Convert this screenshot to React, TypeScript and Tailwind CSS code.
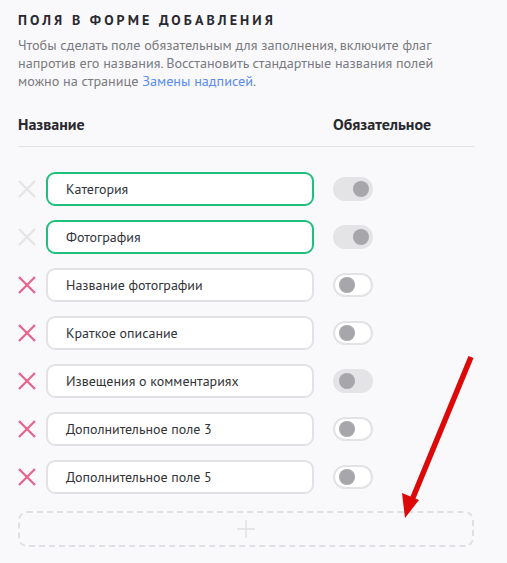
type Field = {
  name: string;
  locked: boolean;
  toggle: "lockedOn" | "lockedOff" | "off";
};

const FIELDS: Field[] = [
  { name: "Категория", locked: true, toggle: "lockedOn" },
  { name: "Фотография", locked: true, toggle: "lockedOn" },
  { name: "Название фотографии", locked: false, toggle: "off" },
  { name: "Краткое описание", locked: false, toggle: "off" },
  { name: "Извещения о комментариях", locked: false, toggle: "lockedOff" },
  { name: "Дополнительное поле 3", locked: false, toggle: "off" },
  { name: "Дополнительное поле 5", locked: false, toggle: "off" },
];

function RemoveIcon({ muted }: { muted: boolean }) {
  return (
    <svg width="18" height="18" viewBox="0 0 18 18" aria-hidden="true">
      <path
        d="M1 1 L17 17 M17 1 L1 17"
        stroke={muted ? "#e4e4e6" : "#e8628d"}
        strokeWidth="2.2"
        fill="none"
      />
    </svg>
  );
}

function Toggle({ state }: { state: Field["toggle"] }) {
  if (state === "off") {
    return (
      <span className="flex h-[24px] w-[40px] items-center rounded-full border-2 border-[#e3e3e6] bg-white pl-[4px]">
        <span className="h-[16px] w-[16px] rounded-full bg-[#a7a7ab]" />
      </span>
    );
  }

  return (
    <span
      className={`flex h-[24px] w-[40px] items-center rounded-full bg-[#e4e4e7] ${
        state === "lockedOn" ? "justify-end pr-[4px]" : "justify-start pl-[6px]"
      }`}
    >
      <span className="h-[16px] w-[16px] rounded-full bg-[#a7a7ab]" />
    </span>
  );
}

function FieldRow({ field }: { field: Field }) {
  return (
    <div className="flex items-center">
      <div className="flex w-[28px] items-center">
        <RemoveIcon muted={field.locked} />
      </div>
      <div
        className={`flex h-[34px] w-[268px] items-center rounded-[9px] border-2 bg-white pl-[18px] text-[14px] text-[#333338] ${
          field.locked ? "border-[#1fc07e]" : "border-[#e2e2e6]"
        }`}
      >
        {field.name}
      </div>
      <div className="ml-[19px]">
        <Toggle state={field.toggle} />
      </div>
    </div>
  );
}

export default function App() {
  return (
    <div
      className="relative h-[563px] w-[507px] overflow-hidden bg-[#f9f9fb] pl-[18px] pr-[33px] pt-[10px]"
      style={{ fontFamily: '"PT Sans", "Liberation Sans", "Noto Sans", sans-serif' }}
    >
      <h2 className="text-[14px] font-bold uppercase leading-[20px] tracking-[3.1px] text-[#2a2930]">
        Поля в форме добавления
      </h2>
      <p className="mt-[6px] pr-[20px] text-[14.2px] leading-[18px] text-[#7a7a80]">
        Чтобы сделать поле обязательным для заполнения, включите флаг напротив его названия.
        Восстановить стандартные названия полей можно на странице{" "}
        <a className="text-[#5a8cf0]">Замены надписей</a>.
      </p>

      <div className="mt-[24px] flex border-b border-[#e3e3e6] pb-[12px] text-[16px] font-bold leading-[20px] text-[#2a2930]">
        <span className="w-[315px]">Название</span>
        <span>Обязательное</span>
      </div>

      <div className="mt-[25px] flex flex-col gap-[14px]">
        {FIELDS.map((field) => (
          <FieldRow key={field.name} field={field} />
        ))}
      </div>

      <div className="mt-[17px] flex h-[36px] items-center justify-center rounded-[9px] border-2 border-dashed border-[#e0e0e4]">
        <svg width="20" height="20" viewBox="0 0 20 20" aria-hidden="true">
          <path d="M10 1 V19 M1 10 H19" stroke="#e0e0e3" strokeWidth="1.5" />
        </svg>
      </div>

      <svg
        className="pointer-events-none absolute left-0 top-0"
        width="507"
        height="563"
        viewBox="0 0 507 563"
        aria-hidden="true"
      >
        <line x1="471" y1="357" x2="412" y2="500" stroke="#dd0808" strokeWidth="5.5" />
        <polygon points="405,518 402,493 419,500" fill="#dd0808" />
      </svg>
    </div>
  );
}
